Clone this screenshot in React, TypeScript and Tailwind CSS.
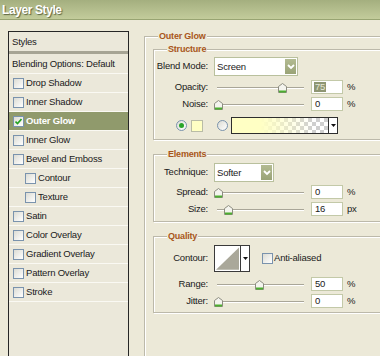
import type { ReactNode } from 'react';

const styles = [
  { name: 'Drop Shadow' },
  { name: 'Inner Shadow' },
  { name: 'Outer Glow', checked: true, active: true },
  { name: 'Inner Glow' },
  { name: 'Bevel and Emboss' },
  { name: 'Contour', indent: true },
  { name: 'Texture', indent: true },
  { name: 'Satin' },
  { name: 'Color Overlay' },
  { name: 'Gradient Overlay' },
  { name: 'Pattern Overlay' },
  { name: 'Stroke' },
];

function CheckBox({ checked }: { checked?: boolean }) {
  return (
    <span className="flex h-[11px] w-[11px] shrink-0 items-center justify-center border border-[#7a93ad] bg-gradient-to-br from-[#dcdcd4] to-white">
      {checked && (
        <svg width="7" height="7" viewBox="0 0 7 7">
          <path d="M0.5 3.5 L2.5 5.5 L6.5 1" stroke="#21a121" strokeWidth="1.6" fill="none" />
        </svg>
      )}
    </span>
  );
}

function Radio({ checked }: { checked?: boolean }) {
  return (
    <span className="flex h-[11px] w-[11px] shrink-0 items-center justify-center rounded-full border border-[#7a93ad] bg-gradient-to-br from-[#dcdcd4] to-white">
      {checked && <span className="h-[5px] w-[5px] rounded-full bg-[#2aa52a]" />}
    </span>
  );
}

function GroupBox({ title, className, children }: { title: string; className: string; children?: ReactNode }) {
  return (
    <div className={`relative border border-[#bcb9aa] shadow-[inset_1px_1px_0_#fff,1px_1px_0_#fff] ${className}`}>
      <span className="absolute left-[13px] top-[-7px] bg-[#ece9d8] px-[1px] text-[9px] font-bold tracking-[-0.2px] text-[#a8561a]">
        {title}
      </span>
      {children}
    </div>
  );
}

function Label({ children }: { children: ReactNode }) {
  return <span className="w-[55px] shrink-0 pr-[1px] text-right">{children}</span>;
}

function Chevron() {
  return (
    <svg width="8" height="6" viewBox="0 0 8 6">
      <path d="M1 1 L4 4 L7 1" stroke="#fff" strokeWidth="1.8" fill="none" />
    </svg>
  );
}

function Select({ value, width }: { value: string; width: string }) {
  return (
    <div className={`ml-[5px] flex h-[19px] items-stretch border border-[#b9c09d] bg-white ${width}`}>
      <span className="flex-1 pl-[2px] leading-[18px]">{value}</span>
      <span className="m-[1px] flex w-[11px] items-center justify-center bg-gradient-to-b from-[#b3bb92] to-[#9aa377]">
        <Chevron />
      </span>
    </div>
  );
}

function Slider({ pos }: { pos: number }) {
  return (
    <div className="relative ml-[5px] h-[14px] w-[90px] shrink-0">
      <div className="absolute left-[3px] right-0 top-[7px] h-[2px] border-t border-[#a9a698] bg-white" />
      <svg className="absolute top-[3px]" style={{ left: pos }} width="9" height="10" viewBox="0 0 9 10">
        <path d="M0.5 3.5 L4.5 0.5 L8.5 3.5 L8.5 9.5 L0.5 9.5 Z" fill="#f4f4ee" stroke="#8c8c80" />
        <rect x="1" y="7.5" width="7" height="2" fill="#4cae2f" />
      </svg>
    </div>
  );
}

function ValueRow({ label, pos, value, unit, selected }: { label: string; pos: number; value: string; unit: string; selected?: boolean }) {
  return (
    <div className="flex h-[14px] items-center">
      <Label>{label}</Label>
      <Slider pos={pos} />
      <div className="ml-[7px] flex h-[14px] w-[32px] items-center border border-[#c3c9a8] bg-white pl-[2px]">
        {selected ? <span className="bg-[#8e9673] px-[1px] leading-[10px] text-[#e6e8d6]">{value}</span> : <span className="pl-[1px]">{value}</span>}
      </div>
      <span className="ml-[4px]">{unit}</span>
    </div>
  );
}

export default function App() {
  return (
    <div className="h-[356px] w-[380px] overflow-hidden bg-[#ece9d8] font-['Liberation_Sans',Arial,sans-serif] text-[9.5px] tracking-[-0.2px] text-[#1a1a1a]">
      {/* Title bar */}
      <div className="h-[20px] border-b border-[#98a472] bg-gradient-to-b from-[#a4af7f] to-[#c3cc9b] pl-[2px] pt-[3px] text-[12px] font-bold leading-[14px] tracking-[-0.4px] text-white [text-shadow:1px_1px_1px_#5d6440]">
        Layer Style
      </div>

      <div className="flex items-start">
        {/* Styles list */}
        <div className="ml-[8px] mt-[11px] h-[340px] w-[121px] shrink-0 border border-[#262626] bg-[#ebe8da]">
          <div className="h-[19px] pl-[3px] leading-[19px]">Styles</div>
          <div className="h-[3px] bg-[#a6a494]" />
          <div className="h-[20px] border-b border-[#faf9f3] pl-[3px] leading-[19px]">Blending Options: Default</div>
          {styles.map((s) => (
            <div
              key={s.name}
              className={`flex h-[19px] items-center gap-[2px] border-b border-[#faf9f3] ${s.indent ? 'pl-[16px]' : 'pl-[4px]'} ${
                s.active ? 'bg-[#909a6c] font-bold text-white' : ''
              }`}
            >
              <CheckBox checked={s.checked} />
              <span>{s.name}</span>
            </div>
          ))}
        </div>

        {/* Options */}
        <GroupBox title="Outer Glow" className="ml-[15px] mt-[16px] h-[330px] w-[260px] shrink-0 pl-[8px] pt-[12px]">
          <GroupBox title="Structure" className="h-[91px] w-[250px] pt-[7px]">
            <div className="flex flex-col">
              <div className="flex h-[19px] items-center">
                <Label>Blend Mode:</Label>
                <Select value="Screen" width="w-[84px]" />
              </div>
              <div className="mt-[4px] flex flex-col gap-[3px]">
                <ValueRow label="Opacity:" pos={64} value="75" unit="%" selected />
                <ValueRow label="Noise:" pos={0} value="0" unit="%" />
              </div>
              <div className="mt-[6px] flex h-[17px] items-center">
                <span className="ml-[22px]">
                  <Radio checked />
                </span>
                <span className="ml-[4px] h-[12px] w-[12px] border border-[#b9bca6] bg-[#ffffc4]" />
                <span className="ml-[14px]">
                  <Radio />
                </span>
                <div className="ml-[3px] flex h-[17px] w-[107px] border border-[#2e2e2e] bg-[repeating-conic-gradient(#cfcfcf_0%_25%,#ffffff_0%_50%)] bg-[length:8px_8px]">
                  <div className="flex-1 bg-[linear-gradient(to_right,#ffffc4_0%,#ffffc4_30%,rgba(255,255,196,0)_85%)]" />
                  <div className="flex w-[9px] items-center justify-center border-l border-[#2e2e2e] bg-white">
                    <svg width="5" height="3" viewBox="0 0 5 3">
                      <path d="M0 0 L5 0 L2.5 3 Z" fill="#111" />
                    </svg>
                  </div>
                </div>
              </div>
            </div>
          </GroupBox>

          <GroupBox title="Elements" className="mt-[14px] h-[68px] w-[250px] pt-[8px]">
            <div className="flex flex-col">
              <div className="flex h-[19px] items-center">
                <Label>Technique:</Label>
                <Select value="Softer" width="w-[60px]" />
              </div>
              <div className="mt-[3px] flex flex-col gap-[3px]">
                <ValueRow label="Spread:" pos={0} value="0" unit="%" />
                <ValueRow label="Size:" pos={10} value="16" unit="px" />
              </div>
            </div>
          </GroupBox>

          <GroupBox title="Quality" className="mt-[14px] h-[77px] w-[250px] pt-[8px]">
            <div className="flex flex-col">
              <div className="flex h-[27px] items-center">
                <Label>Contour:</Label>
                <div className="ml-[5px] flex h-[27px] w-[36px] border border-[#3a3a3a] bg-white">
                  <svg className="m-[1px]" width="24" height="23" viewBox="0 0 24 23">
                    <path d="M0 23 L24 0 L24 23 Z" fill="#aaa89a" />
                  </svg>
                  <div className="ml-auto flex w-[9px] items-center justify-center border-l border-[#3a3a3a]">
                    <svg width="5" height="3" viewBox="0 0 5 3">
                      <path d="M0 0 L5 0 L2.5 3 Z" fill="#111" />
                    </svg>
                  </div>
                </div>
                <span className="ml-[12px]">
                  <CheckBox />
                </span>
                <span className="ml-[1px]">Anti-aliased</span>
              </div>
              <div className="mt-[5px] flex flex-col gap-[3px]">
                <ValueRow label="Range:" pos={41} value="50" unit="%" />
                <ValueRow label="Jitter:" pos={0} value="0" unit="%" />
              </div>
            </div>
          </GroupBox>
        </GroupBox>
      </div>
    </div>
  );
}
